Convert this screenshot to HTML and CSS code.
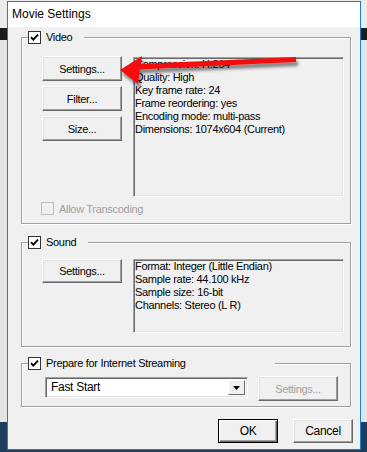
FILE: index.html
```html
<!DOCTYPE html>
<html lang="en">
<head>
  <meta charset="UTF-8" />
  <title>Movie Settings</title>
  <link rel="stylesheet" href="styles.css">
</head>
<body>

<div class="window">
  <div class="titlebar">Movie Settings</div>

  <div class="dialog">
    <!-- Video -->
    <div class="group">
      <div class="group-title">
        <span class="check"><svg viewBox="0 0 11 11"><path d="M2 5.2 L4.3 7.6 L9 2.6" /></svg></span>
        Video
      </div>
      <div class="group-row">
        <div class="btn-col">
          <button class="btn">Settings...</button>
          <button class="btn">Filter...</button>
          <button class="btn">Size...</button>
        </div>
        <div class="info info-video">
          Compression: H.264<br>
          Quality: High<br>
          Key frame rate: 24<br>
          Frame reordering: yes<br>
          Encoding mode: multi-pass<br>
          Dimensions: 1074x604 (Current)
        </div>
      </div>
      <div class="option disabled">
        <span class="check"></span>
        Allow Transcoding
      </div>
    </div>

    <!-- Sound -->
    <div class="group group-sound">
      <div class="group-title">
        <span class="check"><svg viewBox="0 0 11 11"><path d="M2 5.2 L4.3 7.6 L9 2.6" /></svg></span>
        Sound
      </div>
      <div class="group-row">
        <div class="btn-col">
          <button class="btn btn-short">Settings...</button>
        </div>
        <div class="info info-sound">
          Format: Integer (Little Endian)<br>
          Sample rate: 44.100 kHz<br>
          Sample size: 16-bit<br>
          Channels: Stereo (L R)
        </div>
      </div>
    </div>

    <!-- Streaming -->
    <div class="group group-stream">
      <div class="group-title title-wide">
        <span class="check"><svg viewBox="0 0 11 11"><path d="M2 5.2 L4.3 7.6 L9 2.6" /></svg></span>
        Prepare for Internet Streaming
      </div>
      <div class="stream-row">
        <div class="combo">
          <span class="combo-text">Fast Start</span>
          <span class="combo-btn"><svg viewBox="0 0 7 4"><path d="M0 0 H7 L3.5 4 Z" /></svg></span>
        </div>
        <button class="btn" disabled>Settings...</button>
      </div>
    </div>

    <div class="footer">
      <button class="btn btn-default">OK</button>
      <button class="btn">Cancel</button>
    </div>
  </div>

  <!-- красная стрелка поверх окна -->
  <svg class="arrow" viewBox="7 1 354 449">
    <defs>
      <filter id="shadow" x="-20%" y="-50%" width="140%" height="200%">
        <feDropShadow dx="2" dy="4" stdDeviation="1.8" flood-color="#000" flood-opacity="0.45" />
      </filter>
    </defs>
    <g filter="url(#shadow)" fill="#f40d0d">
      <polygon points="296,57 296,62 139,69.5 139,64" />
      <polygon points="120,70 142,56 138,84" />
    </g>
  </svg>
</div>

</body>
</html>
```

FILE: styles.css
```css
* {
  box-sizing: border-box;
}

body {
  margin: 0;
  height: 452px;
  overflow: hidden;
  font-family: "Liberation Sans", Arial, sans-serif;
  font-size: 11px;
  color: #000;
  background: linear-gradient(to bottom,
    #ececec 0, #ececec 28px,
    #1b1b1b 28px, #1b1b1b 40px,
    #e4e4e4 40px, #e4e4e4 422px,
    #1f3d5c 422px);
}

.window {
  position: relative;
  margin: 1px 0 0 7px;
  width: 354px;
  height: 449px;
  border: 1px solid #1a7fd4;
  background: #f0f0f0;
}

.titlebar {
  height: 25px;
  line-height: 25px;
  padding-left: 4px;
  background: #fff;
  font-size: 12px;
}

.dialog {
  display: flex;
  flex-direction: column;
  padding: 10px 7px 0 13px;
}

/* Group boxes */
.group {
  margin-right: 2px;
  border: 1px solid #a0a0a0;
  box-shadow: inset 1px 1px 0 #fff, 1px 1px 0 #fff;
  padding-bottom: 8px;
}

.group-sound {
  margin-top: 18px;
  padding-bottom: 13px;
}

.group-stream {
  margin-top: 16px;
  padding-bottom: 5px;
}

.group-title {
  display: flex;
  align-items: center;
  gap: 5px;
  width: max-content;
  height: 13px;
  margin: -7px 0 0 6px;
  padding-right: 12px;
  line-height: 13px;
  letter-spacing: -0.3px;
  background: #f0f0f0;
}

.title-wide {
  width: 247px;
}

.check {
  width: 13px;
  height: 13px;
  flex: none;
  border: 1px solid #333;
  background: #fff;
  display: flex;
}

.check svg {
  width: 11px;
  height: 11px;
  fill: none;
  stroke: #000;
  stroke-width: 1.9;
}

.group-row {
  display: flex;
  align-items: flex-start;
  margin-top: 12px;
  padding-left: 20px;
}

.group-sound .group-row {
  margin-top: 10px;
}

.btn-col {
  display: flex;
  flex-direction: column;
  gap: 5px;
}

/* Classic buttons */
.btn {
  width: 80px;
  height: 25px;
  padding: 0;
  font-family: inherit;
  font-size: 11px;
  letter-spacing: -0.3px;
  color: #000;
  background: #f0f0f0;
  border: 1px solid;
  border-color: #fff #696969 #696969 #fff;
  box-shadow: inset -1px -1px 0 #a0a0a0, inset 1px 1px 0 #e3e3e3;
}

.btn-short {
  height: 24px;
}

.btn:disabled {
  color: #a0a0a0;
}

.btn-default {
  border-color: #000;
  box-shadow: inset 1px 1px 0 #fff, inset -1px -1px 0 #696969, inset -2px -2px 0 #a0a0a0;
}

/* Read-only info boxes */
.info {
  margin-left: 11px;
  width: 211px;
  padding: 0 0 0 1px;
  line-height: 13px;
  letter-spacing: -0.3px;
  background: #f0f0f0;
  border: 1px solid;
  border-color: #a0a0a0 #fff #fff #a0a0a0;
  box-shadow: inset 1px 1px 0 #696969, inset -1px -1px 0 #e3e3e3;
}

.info-video {
  margin-top: 1px;
  height: 140px;
}

.info-sound {
  height: 74px;
}

.option {
  display: flex;
  align-items: center;
  gap: 5px;
  margin: 5px 0 0 19px;
  height: 13px;
  letter-spacing: -0.3px;
}

.option.disabled {
  color: #a0a0a0;
}

.option.disabled .check {
  border-color: #bcbcbc;
  background: #f0f0f0;
}

/* Streaming row */
.stream-row {
  display: flex;
  align-items: flex-start;
  gap: 10px;
  margin-top: 6px;
  padding-left: 23px;
}

.combo {
  display: flex;
  align-items: stretch;
  margin-top: 1px;
  width: 203px;
  height: 21px;
  background: #fff;
  border: 1px solid;
  border-color: #a0a0a0 #fff #fff #a0a0a0;
  box-shadow: inset 1px 1px 0 #696969, inset -1px -1px 0 #e3e3e3;
  padding: 2px;
}

.combo-text {
  flex: 1;
  padding-left: 3px;
  line-height: 15px;
  font-size: 12px;
  letter-spacing: -0.3px;
}

.combo-btn {
  width: 17px;
  display: flex;
  align-items: center;
  justify-content: center;
  background: #f0f0f0;
  border: 1px solid;
  border-color: #fff #696969 #696969 #fff;
}

.combo-btn svg {
  width: 7px;
  height: 4px;
  fill: #000;
}

/* OK / Cancel */
.footer {
  display: flex;
  justify-content: flex-end;
  gap: 15px;
  margin-top: 12px;
}

.footer .btn {
  width: 60px;
  height: 24px;
  font-size: 12px;
}

.arrow {
  position: absolute;
  left: -1px;
  top: -1px;
  width: 354px;
  height: 449px;
  pointer-events: none;
}
```
